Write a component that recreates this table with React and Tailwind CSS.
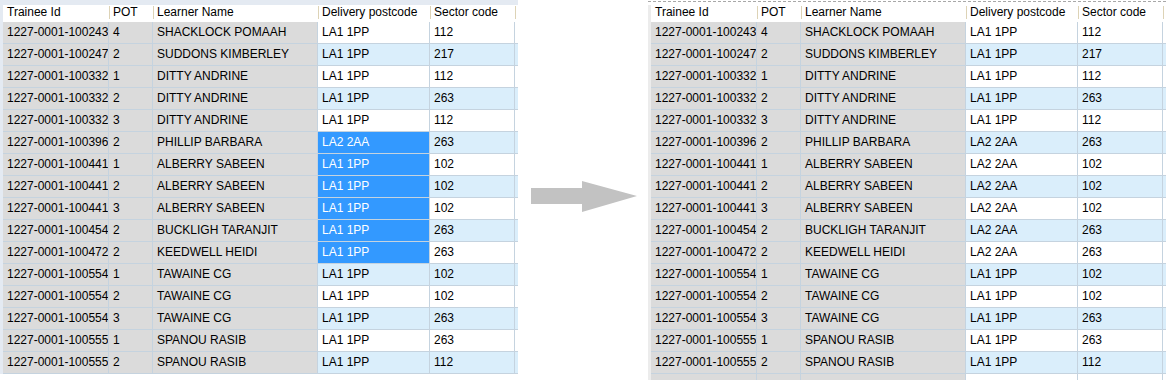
import React from "react";

const LEFT_ROWS = [
  ["1227-0001-100243", "4", "SHACKLOCK POMAAH", "LA1 1PP", "112"],
  ["1227-0001-100247", "2", "SUDDONS KIMBERLEY", "LA1 1PP", "217"],
  ["1227-0001-100332", "1", "DITTY ANDRINE", "LA1 1PP", "112"],
  ["1227-0001-100332", "2", "DITTY ANDRINE", "LA1 1PP", "263"],
  ["1227-0001-100332", "3", "DITTY ANDRINE", "LA1 1PP", "112"],
  ["1227-0001-100396", "2", "PHILLIP BARBARA", "LA2 2AA", "263"],
  ["1227-0001-100441", "1", "ALBERRY SABEEN", "LA1 1PP", "102"],
  ["1227-0001-100441", "2", "ALBERRY SABEEN", "LA1 1PP", "102"],
  ["1227-0001-100441", "3", "ALBERRY SABEEN", "LA1 1PP", "102"],
  ["1227-0001-100454", "2", "BUCKLIGH TARANJIT", "LA1 1PP", "263"],
  ["1227-0001-100472", "2", "KEEDWELL HEIDI", "LA1 1PP", "263"],
  ["1227-0001-100554", "1", "TAWAINE CG", "LA1 1PP", "102"],
  ["1227-0001-100554", "2", "TAWAINE CG", "LA1 1PP", "102"],
  ["1227-0001-100554", "3", "TAWAINE CG", "LA1 1PP", "263"],
  ["1227-0001-100555", "1", "SPANOU RASIB", "LA1 1PP", "263"],
  ["1227-0001-100555", "2", "SPANOU RASIB", "LA1 1PP", "112"],
];

// after the paste: rows 6-11 carry the copied postcode
const RIGHT_ROWS = LEFT_ROWS.map((r, i) => (i >= 5 && i <= 10 ? [r[0], r[1], r[2], "LA2 2AA", r[4]] : r));

const HEADERS = ["Trainee Id", "POT", "Learner Name", "Delivery postcode", "Sector code"];
const WIDTHS = ["w-[106px]", "w-[44px]", "w-[165px]", "w-[112px]", "w-[85px]"];

function Grid({ rows, selected = [], dashed = false, extraRow = false }) {
  return (
    <div className={`flex flex-col ${dashed ? "mt-[1px] border-t border-dashed border-[#a8a8a8] pt-[3px]" : "bg-[#e4eaf2] pt-[5px]"}`}>
      <div className={`flex pl-[3px] ${dashed ? "bg-[#ececec]" : ""}`}>
        <div className="flex flex-col bg-white">
          <div className="flex h-[17px] bg-white">
            {HEADERS.map((h, i) => (
              <div key={h} className={`${WIDTHS[i]} relative pl-[4px] text-[12px] leading-[15px] text-black`}>
                {h}
                <span className="absolute right-[-1px] top-[1px] h-[13px] w-px bg-[#ddd3b6]" />
              </div>
            ))}
            <div className="w-[3px]" />
          </div>
          {[...rows, ...(extraRow ? [null] : [])].map((r, ri) => {
            const alt = ri % 2 === 1;
            const light = alt ? "bg-[#daeefb]" : "bg-white";
            if (!r) {
              return (
                <div key="extra" className="flex h-[6px]">
                  {WIDTHS.map((w, i) => (
                    <div key={i} className={`${w} border-r border-[#c5d3df] ${i < 3 ? "bg-[#dbdbdb]" : light}`} />
                  ))}
                  <div className={`w-[3px] ${light}`} />
                </div>
              );
            }
            return (
              <div key={ri} className="flex h-[22px]">
                {r.map((c, i) => {
                  const sel = i === 3 && selected.includes(ri);
                  const bg = i < 3 ? "bg-[#dbdbdb]" : sel ? "bg-[#3399ff] text-white" : light;
                  return (
                    <div
                      key={i}
                      className={`${WIDTHS[i]} ${bg} overflow-hidden whitespace-nowrap border-r border-b border-[#c5d3df] pl-[4px] pt-[3px] text-[12px] leading-[15px]`}
                    >
                      {c}
                    </div>
                  );
                })}
                <div className={`w-[3px] border-b border-[#c5d3df] ${light}`} />
              </div>
            );
          })}
        </div>
      </div>
    </div>
  );
}

export default function App() {
  return (
    <div className="flex h-[380px] w-[1169px] items-start overflow-hidden bg-white text-black" style={{ fontFamily: '"Liberation Sans", Arial, sans-serif' }}>
      <Grid rows={LEFT_ROWS} selected={[5, 6, 7, 8, 9, 10]} />
      <div className="flex w-[130px] shrink-0 items-center self-stretch pl-[13px]">
        <svg width="107" height="32" viewBox="0 0 107 32" className="mt-[14px]">
          <polygon points="0,7 51,7 51,0 106,15 51,31 51,23 0,23" fill="#c2c2c2" />
        </svg>
      </div>
      <Grid rows={RIGHT_ROWS} dashed extraRow />
    </div>
  );
}
